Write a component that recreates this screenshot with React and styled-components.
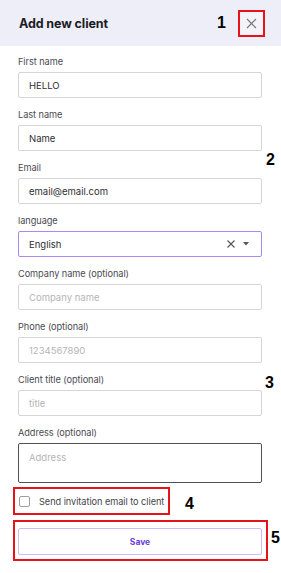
import React from "react";
import styled, { createGlobalStyle } from "styled-components";

const Global = createGlobalStyle`
  html, body { margin: 0; padding: 0; background: #fff; }
  body { font-family: Inter, "Noto Sans", sans-serif; color: #333; }
  * { box-sizing: border-box; }
`;

const Page = styled.div`
  width: 281px;
  height: 573px;
  background: #fff;
  position: relative;
  overflow: hidden;
`;

const Header = styled.div`
  height: 46px;
  background: #eeeef9;
  display: flex;
  align-items: center;
  padding: 0 16px 0 19px;
`;

const Title = styled.h1`
  margin: 0;
  flex: 1;
  font-size: 12.5px;
  font-weight: 700;
  color: #1c1c24;
  letter-spacing: -0.1px;
`;

const Marker = styled.span`
  font-family: "Liberation Sans", Arial, sans-serif;
  font-weight: 700;
  font-size: 16px;
  color: #000;
  line-height: 1;
  flex-shrink: 0;
`;

const HeaderMarker = styled(Marker)`
  margin-right: 12px;
`;

const RedBox = styled.div`
  border: 2px solid #e5141b;
  flex-shrink: 0;
`;

const CloseBox = styled(RedBox)`
  width: 27px;
  height: 27px;
  display: flex;
  align-items: center;
  justify-content: center;
  background: #f3f3f9;
`;

const CloseButton = styled.button`
  border: none;
  background: transparent;
  padding: 0;
  display: flex;
  color: #777;
`;

const Form = styled.div`
  position: relative;
  padding: 9px 19px 0 18px;
  display: flex;
  flex-direction: column;
`;

const Field = styled.div`
  display: flex;
  flex-direction: column;
  gap: 3px;
  margin-bottom: 10px;
`;

const Label = styled.label`
  font-size: 9.2px;
  line-height: 14px;
  color: #4a4a52;
  letter-spacing: -0.05px;
`;

const Input = styled.input`
  height: 26px;
  width: 100%;
  border: 1px solid #d6d6da;
  border-radius: 2px;
  padding: 0 10px;
  font-family: Inter, "Noto Sans", sans-serif;
  font-size: 9.5px;
  color: #2e2e33;
  outline: none;
  &::placeholder { color: #b4b4b8; }
`;

const TextArea = styled.textarea`
  height: 40px;
  width: 100%;
  border: 1px solid #505055;
  border-radius: 2px;
  padding: 8px 10px;
  font-family: Inter, "Noto Sans", sans-serif;
  font-size: 9.5px;
  resize: none;
  outline: none;
  &::placeholder { color: #b4b4b8; }
`;

const Select = styled.div`
  height: 26px;
  border: 1.5px solid #a98af0;
  border-radius: 2px;
  display: flex;
  align-items: center;
  padding: 0 12px 0 10px;
  font-size: 9.5px;
  color: #2e2e33;
`;

const SelectValue = styled.span`
  flex: 1;
`;

const SelectIcons = styled.span`
  display: flex;
  align-items: center;
  gap: 8px;
  color: #555;
`;

const Row = styled.div`
  display: flex;
  align-items: center;
  margin-left: -5px;
`;

const CheckWrap = styled(RedBox)`
  width: 157px;
  height: 28px;
  display: flex;
  align-items: center;
  gap: 9px;
  padding-left: 4px;
  margin-top: -6px;
`;

const Check = styled.span`
  width: 11px;
  height: 11px;
  flex-shrink: 0;
  border: 1px solid #9d9da3;
  border-radius: 2px;
  background: #fff;
`;

const CheckText = styled.span`
  font-size: 9.2px;
  color: #45454c;
  white-space: nowrap;
  letter-spacing: -0.05px;
`;

const CheckMarker = styled(Marker)`
  margin-left: 15px;
`;

const SaveWrap = styled(RedBox)`
  width: 255px;
  height: 41px;
  padding: 6px 4px 4px 3px;
  margin-top: 5px;
`;

const SaveButton = styled.button`
  width: 100%;
  height: 27px;
  border: 1px solid #cdbdf6;
  border-radius: 2px;
  background: #fff;
  color: #6a3fd8;
  font-family: Inter, "Noto Sans", sans-serif;
  font-size: 8.5px;
  font-weight: 700;
`;

const SaveMarker = styled(Marker)`
  margin-left: 3px;
`;

const SideMarker = styled(Marker)`
  position: absolute;
  left: ${(p) => p.$x}px;
  top: ${(p) => p.$y}px;
`;

const fields = [
  { label: "First name", value: "HELLO" },
  { label: "Last name", value: "Name" },
  { label: "Email", value: "email@email.com" },
];

const optional = [
  { label: "Company name (optional)", placeholder: "Company name" },
  { label: "Phone (optional)", placeholder: "1234567890" },
  { label: "Client title (optional)", placeholder: "title" },
];

export default function App() {
  return (
    <Page>
      <Global />
      <Header>
        <Title>Add new client</Title>
        <HeaderMarker>1</HeaderMarker>
        <CloseBox>
          <CloseButton aria-label="Close">
            <svg width="11" height="11" viewBox="0 0 11 11">
              <path d="M1 1 L10 10 M10 1 L1 10" stroke="currentColor" strokeWidth="1.1" />
            </svg>
          </CloseButton>
        </CloseBox>
      </Header>
      <Form>
        <SideMarker $x={266} $y={106}>2</SideMarker>
        <SideMarker $x={265} $y={329}>3</SideMarker>
        {fields.map((f) => (
          <Field key={f.label}>
            <Label>{f.label}</Label>
            <Input defaultValue={f.value} />
          </Field>
        ))}
        <Field>
          <Label>language</Label>
          <Select>
            <SelectValue>English</SelectValue>
            <SelectIcons>
              <svg width="8" height="8" viewBox="0 0 8 8">
                <path d="M0.5 0.5 L7.5 7.5 M7.5 0.5 L0.5 7.5" stroke="currentColor" strokeWidth="1.1" />
              </svg>
              <svg width="6" height="4" viewBox="0 0 6 4">
                <path d="M0 0 L6 0 L3 3.5 Z" fill="currentColor" />
              </svg>
            </SelectIcons>
          </Select>
        </Field>
        {optional.map((f) => (
          <Field key={f.label}>
            <Label>{f.label}</Label>
            <Input placeholder={f.placeholder} />
          </Field>
        ))}
        <Field>
          <Label>Address (optional)</Label>
          <TextArea placeholder="Address" />
        </Field>
        <Row>
          <CheckWrap>
            <Check />
            <CheckText>Send invitation email to client</CheckText>
          </CheckWrap>
          <CheckMarker>4</CheckMarker>
        </Row>
        <Row>
          <SaveWrap>
            <SaveButton>Save</SaveButton>
          </SaveWrap>
          <SaveMarker>5</SaveMarker>
        </Row>
      </Form>
    </Page>
  );
}
